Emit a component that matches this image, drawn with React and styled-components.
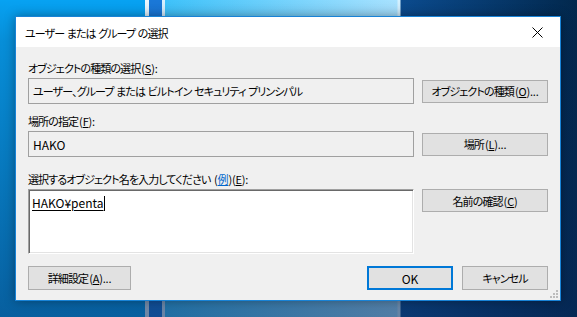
import styled, { createGlobalStyle } from "styled-components";

const GlobalStyle = createGlobalStyle`
	html, body {
		margin: 0;
		padding: 0;
		width: 577px;
		height: 317px;
		overflow: hidden;
	}
	body {
		font-family: "Noto Sans CJK JP", "Noto Sans", sans-serif;
		font-size: 11px;
		letter-spacing: -0.9px;
		word-spacing: 1px;
		font-feature-settings: "palt";
		color: #000;
	}
`;

const Desktop = styled.div`
	width: 577px;
	height: 317px;
	box-sizing: border-box;
	padding: 16px 0 0 15px;
	background:
		linear-gradient(to bottom, rgba(0, 0, 0, 0) 0, rgba(8, 30, 70, 0.15) 40px, rgba(8, 40, 90, 0.55) 317px),
		linear-gradient(
			to right,
			#07a2f2 0 145px,
			#eaf7ff 145px 149px,
			#1a78d8 149px 162px,
			#d8f0ff 162px 165px,
			#3ec2fa 165px,
			#a8e2ff 397px,
			#d4f1ff 398px 400px,
			#0b4b8e 401px,
			#02284d 577px
		);
`;

const Window = styled.div`
	position: relative;
	width: 546px;
	height: 285px;
	box-sizing: border-box;
	border: 1px solid #1883d7;
	background: #f0f0f0;
	box-shadow: 0 0 10px rgba(0, 0, 0, 0.35);
	display: flex;
	flex-direction: column;
`;

const TitleBar = styled.div`
	height: 30px;
	background: #fff;
	display: flex;
	align-items: center;
	justify-content: space-between;
	padding: 0 0 0 9px;
`;

const Title = styled.div`
	line-height: 16px;
	margin-top: 1px;
`;

const CloseButton = styled.div`
	width: 46px;
	height: 30px;
	display: flex;
	align-items: center;
	justify-content: center;
`;

const Body = styled.div`
	flex: 1;
	padding: 13px 12px 0 12px;
	display: flex;
	flex-direction: column;
`;

const Label = styled.div`
	line-height: 16px;
	height: 16px;
	margin-top: ${(p) => p.$top || 0}px;
	margin-bottom: 2px;
	white-space: nowrap;
`;

const Row = styled.div`
	display: grid;
	grid-template-columns: 386px 126px;
	column-gap: 8px;
	align-items: ${(p) => p.$align || "center"};
`;

const ReadOnlyBox = styled.div`
	height: 26px;
	box-sizing: border-box;
	border: 1px solid #a0a0a0;
	background: #f0f0f0;
	padding: 0 4px;
	display: flex;
	align-items: center;
	white-space: pre;
	overflow: hidden;
`;

const NameBox = styled.div`
	height: 65px;
	box-sizing: border-box;
	background: #fff;
	border: 1px solid;
	border-color: #a0a0a0 #fff #fff #a0a0a0;
	box-shadow: inset 1px 1px 0 #696969, inset -1px -1px 0 #e3e3e3;
	padding: 5px 3px;
	line-height: 16px;
	display: flex;
	align-items: flex-start;
`;

const Resolved = styled.span`
	font-size: 12px;
	letter-spacing: 0;
	text-decoration: underline;
	text-underline-offset: 2px;
	font-feature-settings: normal;
`;

const Caret = styled.span`
	display: inline-block;
	width: 1px;
	height: 15px;
	background: #000;
	margin-top: 1px;
`;

const Button = styled.div`
	height: ${(p) => p.$h || 23}px;
	width: ${(p) => (p.$w ? `${p.$w}px` : "auto")};
	box-sizing: border-box;
	border: ${(p) => (p.$default ? "2px solid #0078d7" : "1px solid #adadad")};
	background: #e1e1e1;
	display: flex;
	align-items: center;
	justify-content: center;
	white-space: nowrap;
`;

const Footer = styled.div`
	margin-top: 12px;
	display: flex;
	align-items: center;
`;

const FooterRight = styled.div`
	margin-left: auto;
	display: flex;
	gap: 9px;
`;

const Example = styled.span`
	color: #0066cc;
	text-decoration: underline;
`;

const Latin = styled.span`
	font-size: 12px;
	letter-spacing: 0;
`;

const KeyText = styled.span`
	letter-spacing: -0.2px;
	margin-left: 1px;
`;

const Grip = styled.svg`
	position: absolute;
	right: 2px;
	bottom: 2px;
`;

function Key({ k, tail = "" }) {
	return (
		<KeyText>
			(<u>{k}</u>){tail}
		</KeyText>
	);
}

export default function App() {
	return (
		<>
			<GlobalStyle />
			<Desktop>
				<Window>
					<TitleBar>
						<Title>ユーザー または グループ の選択</Title>
						<CloseButton>
							<svg width="11" height="11" viewBox="0 0 11 11">
								<path d="M0.5 0.5 L10.5 10.5 M10.5 0.5 L0.5 10.5" stroke="#000" strokeWidth="1" fill="none" />
							</svg>
						</CloseButton>
					</TitleBar>
					<Body>
						<Label>
							オブジェクトの種類の選択<Key k="S" tail=":" />
						</Label>
						<Row>
							<ReadOnlyBox>ユーザー、グループ または ビルトイン セキュリティ プリンシパル</ReadOnlyBox>
							<Button>
								オブジェクトの種類<Key k="O" tail="..." />
							</Button>
						</Row>

						<Label $top={9}>
							場所の指定<Key k="F" tail=":" />
						</Label>
						<Row>
							<ReadOnlyBox>
								<Latin>HAKO</Latin>
							</ReadOnlyBox>
							<Button>
								場所<Key k="L" tail="..." />
							</Button>
						</Row>

						<Label $top={14}>
							選択するオブジェクト名を入力してください{" "}
							<KeyText>
								(<Example>例</Example>)(<u>E</u>):
							</KeyText>
						</Label>
						<Row $align="start">
							<NameBox>
								<Resolved>HAKO¥penta</Resolved>
								<Caret />
							</NameBox>
							<Button>
								名前の確認<Key k="C" />
							</Button>
						</Row>

						<Footer>
							<Button $h={24} $w={103}>
								詳細設定<Key k="A" tail="..." />
							</Button>
							<FooterRight>
								<Button $h={24} $w={86} $default>
									<Latin>OK</Latin>
								</Button>
								<Button $h={24} $w={86}>
									キャンセル
								</Button>
							</FooterRight>
						</Footer>
					</Body>
					<Grip width="8" height="8" viewBox="0 0 8 8">
						<rect x="6" y="0" width="2" height="2" fill="#bcbcbc" />
						<rect x="3" y="3" width="2" height="2" fill="#bcbcbc" />
						<rect x="6" y="3" width="2" height="2" fill="#bcbcbc" />
						<rect x="0" y="6" width="2" height="2" fill="#bcbcbc" />
						<rect x="3" y="6" width="2" height="2" fill="#bcbcbc" />
						<rect x="6" y="6" width="2" height="2" fill="#bcbcbc" />
					</Grip>
				</Window>
			</Desktop>
		</>
	);
}
